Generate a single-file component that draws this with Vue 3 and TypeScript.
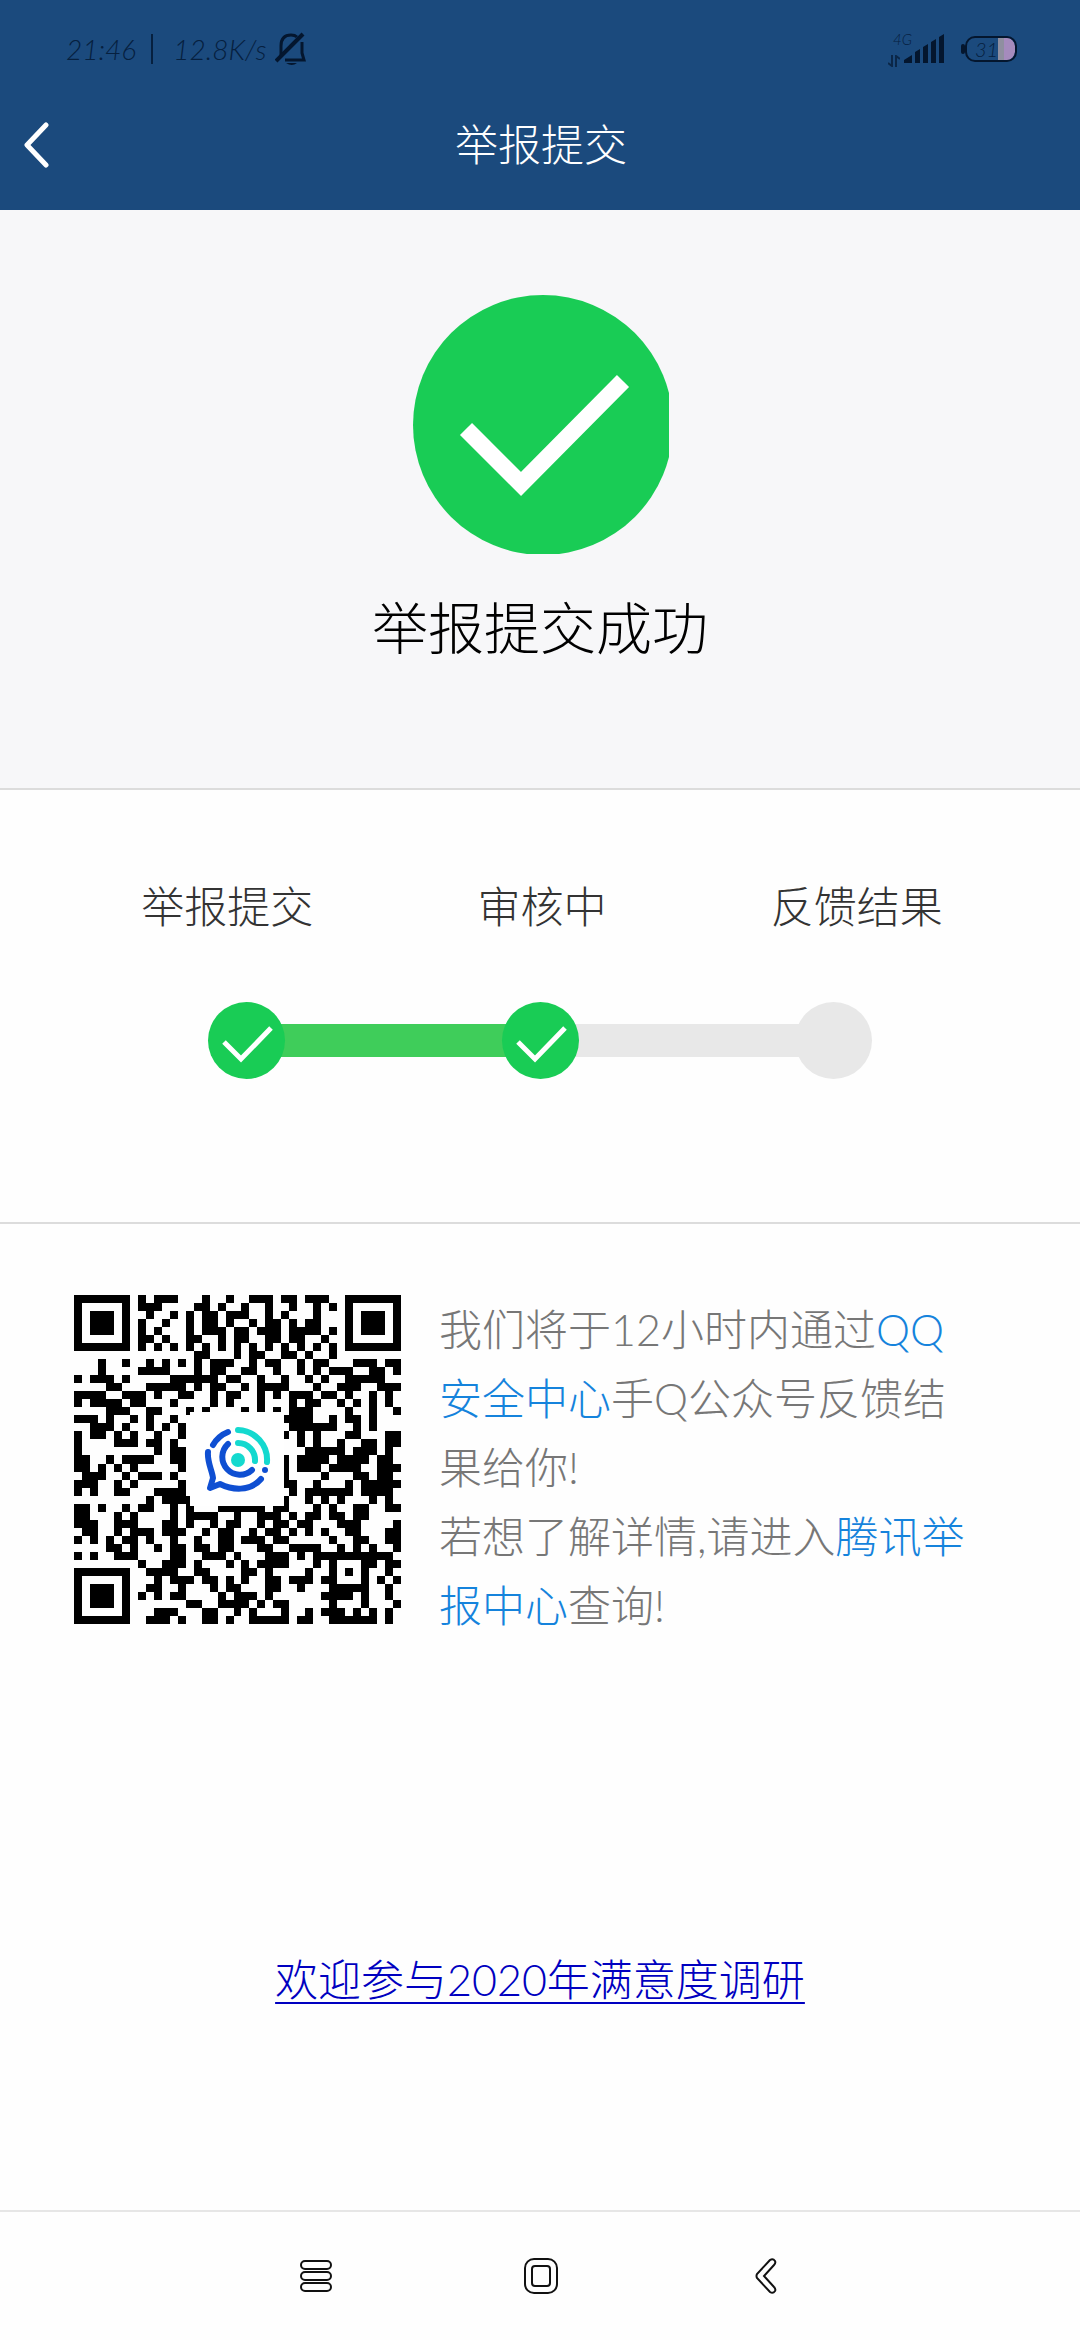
<script setup lang="ts">
interface Step {
  label: string
  done: boolean
}

const steps: Step[] = [
  { label: '举报提交', done: true },
  { label: '审核中', done: true },
  { label: '反馈结果', done: false },
]

// Dark modules of each QR row, as column numbers and inclusive ranges.
const qrRows: string[] = [
  '0-6 8 10-12 16 19 22-24 26-27 29-31 34-40',
  '0 6 8-10 15-16 18 21 24 27 30 32 34 40',
  '0 2-4 6 9 12 14 16-17 19-21 24 26 30 34 36-38 40',
  '0 2-4 6 8 11 14 16-17 19 22 24-25 27 29-30 34 36-38 40',
  '0 2-4 6 8 10 14 16-18 20-21 23-25 27-30 32 34 36-38 40',
  '0 6 8-9 11 14-15 18 20-21 24-25 27-28 31 34 40',
  '0-6 8 10 12 14 16 18 20 22 24 26 28 30 32 34-40',
  '15-16 20 22-23 26-27 29 32',
  '3 6 9 11 13 15 17-19 22 24-25 28 30-31 35-37 39-40',
  '3 8-11 15 17-18 21-22 25 28 30 32-34 37-38 40',
  '0 2-4 6 12-17 19-20 23 26 29 31 34-38',
  '4-5 9-13 15 17-18 21 23-26 30 33-35 38-40',
  '0-3 6-8 10 13-14 17 19-20 23 25 27-29 31-32 34 37 39',
  '0 2-5 7-8 12 17 19 23 27 29-30 33 35 37 39',
  '4-6 9-10 14 16 21 23 25 27-29 34 37 40',
  '0-2 4 7 9 12 26-29 32 34-35 37',
  '2-4 6 9 11 13 27-32 35 37',
  '0 2-3 5 7 10 13 26 28 30 34-35 39-40',
  '0 5-7 9-10 12 28 30 33 36-37 39-40',
  '0 10 12-13 29-33 35-37 39',
  '0-1 4 6-9 12-13 26 28-31 33-36 38-39',
  '0-1 3 5 7 13 26 28-30 32-35 38-40',
  '1-3 6 8-10 12 26 31 35-36 38-39',
  '0-2 5 7 13 26-27 30 34 36-40',
  '0 2 5-6 10-13 27 29-34 36-39',
  '9 11-14 26 29 31 33 37 39',
  '0-1 3 6 8-9 12 14 18-23 25-26 30 32 35-36 39-40',
  '0-1 5 7 12 14-17 20 23-25 27 29-30 32-33 35-36',
  '0-2 5-7 11-12 14 17 19-20 23 25-26 28-29 33-35 40',
  '1-2 5 7-9 11-13 16 18-19 22 24-25 27 29 31 34-35 39-40',
  '0 2 4 6-7 9 12 15 18-19 21-23 25-26 32 35-36 39-40',
  '4-5 7 10 12-13 15-16 18-19 23-24 27-30 33 35 37 40',
  '0 2 5-7 12-13 16-18 20 24-26 28 30-39',
  '8 11-13 15 19 21 23-26 30 32 36-37 39-40',
  '0-6 9-12 15-16 21-22 24 29 32 34 36 39',
  '0 6 10 12-14 16-17 19 21 24-25 27-29 31-32 36 38 40',
  '0 2-4 6 9-10 13 17 19-20 24-25 28 32-36 39',
  '0 2-4 6 8 10 12-13 18 20-22 24 31-34 36 39',
  '0 2-4 6 14-15 18-21 23 25-26 32 36 40',
  '0 6 10-12 16-17 20 22 26 29 31-33 35 37 39',
  '0-6 9-11 13 16-17 19 22-26 28-29 32-37 39',
]

const qrPath: string = qrRows
  .map((row, y) =>
    row
      .split(' ')
      .map((part) => {
        const [a, b] = part.split('-').map(Number)
        const w = (b ?? a) - a + 1
        return `M${a} ${y}h${w}v1h-${w}z`
      })
      .join(''),
  )
  .join('')
</script>

<template>
  <div class="page">
    <header class="top">
      <div class="status">
        <div class="status-left">
          <span>21:46</span>
          <span class="bar"></span>
          <span>12.8K/s</span>
          <svg class="bell" width="32" height="34" viewBox="0 0 32 34" fill="none" stroke="#04162e" stroke-width="3">
            <path d="M6 24V14C6 6 10 3 16 3q4 0 6 2" />
            <path d="M27 10v11l2 7H10" />
            <path d="M1 29L28 2" stroke-width="4" />
            <path d="M11 31h11q-5 4-11 0z" fill="#04162e" stroke="none" />
          </svg>
        </div>
        <div class="status-right">
          <div class="net">
            <span>4G</span>
            <svg width="12" height="12" viewBox="0 0 12 12" fill="none" stroke="#0b2748" stroke-width="2">
              <path d="M4 0v11L0 8M8 12V1l4 3" />
            </svg>
          </div>
          <svg width="41" height="30" viewBox="0 0 41 30" fill="#04162e">
            <path d="M0 29v-3l8-5v8zM11 29V18l5-3v14zM19 29V13l5-3v19zM27 29V8l5-3v24zM35 29V3l5-3v29z" />
          </svg>
          <div class="battery">
            <svg width="57" height="28" viewBox="0 0 57 28">
              <path d="M37 2h8a10 10 0 0 1 9 9v6a10 10 0 0 1-9 9h-8z" fill="#a58bbd" />
              <path d="M37 2h6v24h-6z" fill="#8f8fa0" />
              <rect x="5" y="2" width="50" height="24" rx="9" fill="none" stroke="#04162e" stroke-width="2" />
              <rect x="0" y="9" width="4" height="10" rx="2" fill="#04162e" />
            </svg>
            <span>31</span>
          </div>
        </div>
      </div>
      <div class="title-bar">
        <button class="back" type="button" aria-label="返回">
          <svg width="26" height="48" viewBox="0 0 26 48" fill="none" stroke="#fff" stroke-width="5" stroke-linecap="round" stroke-linejoin="round">
            <path d="M22 4L3 24l19 20" />
          </svg>
        </button>
        <h1>举报提交</h1>
      </div>
    </header>

    <section class="hero">
      <svg width="257" height="259" viewBox="0 0 257 259">
        <circle cx="131" cy="130" r="130" fill="#19cc55" />
        <path d="M54 134l55 55L211 86" fill="none" stroke="#fff" stroke-width="17" />
      </svg>
      <h2>举报提交成功</h2>
    </section>

    <section class="progress">
      <ol class="labels">
        <li v-for="step in steps" :key="step.label">{{ step.label }}</li>
      </ol>
      <div class="track">
        <template v-for="(step, i) in steps" :key="step.label">
          <span v-if="i > 0" class="link" :class="{ done: step.done }"></span>
          <span class="dot" :class="{ done: step.done }">
            <svg v-if="step.done" width="77" height="77" viewBox="0 0 77 77" fill="none" stroke="#fff" stroke-width="5">
              <path d="M16 40l17 17 30-31" />
            </svg>
          </span>
        </template>
      </div>
    </section>

    <section class="info">
      <svg class="qr" width="327" height="329" viewBox="0 0 327 329">
        <svg width="327" height="329" viewBox="0 0 41 41" preserveAspectRatio="none" shape-rendering="crispEdges">
          <path :d="qrPath" />
        </svg>
        <rect x="116" y="117" width="94" height="94" fill="#fff" />
        <g fill="none" stroke-width="6" stroke-linecap="round">
          <path d="M164 135a30 30 0 0 1 29 32M164 148a17 17 0 0 1 17 18" stroke="#14d9cf" />
          <path d="M154 149a17 17 0 1 0 24 26M154 137a30 30 0 0 0-15 13M134 157c-1 10 4 18 5 26l-3 10 10-4c12 6 30 8 41-5" stroke="#0f4fd2" stroke-linejoin="round" />
        </g>
        <circle cx="164" cy="165" r="7" fill="#14d9cf" />
        <circle cx="191" cy="175" r="3" fill="#0f4fd2" />
      </svg>
      <p>
        我们将于12小时内通过<a href="#">QQ安全中心</a>手Q公众号反馈结果给你!<br />若想了解详情,请进入<a href="#">腾讯举报中心</a>查询!
      </p>
    </section>

    <div class="survey"><a href="#">欢迎参与2020年满意度调研</a></div>

    <nav class="nav">
      <button type="button" aria-label="最近任务">
        <svg width="34" height="34" viewBox="0 0 34 34" fill="none" stroke="#111" stroke-width="2">
          <rect x="2" y="2" width="30" height="8" rx="4" />
          <rect x="2" y="13" width="30" height="8" rx="4" />
          <rect x="2" y="24" width="30" height="8" rx="4" />
        </svg>
      </button>
      <button type="button" aria-label="主页">
        <svg width="34" height="36" viewBox="0 0 34 36" fill="none" stroke="#111" stroke-width="2">
          <rect x="1" y="1" width="32" height="34" rx="9" />
          <rect x="8" y="8" width="18" height="20" rx="3" />
        </svg>
      </button>
      <button type="button" aria-label="返回">
        <svg width="22" height="36" viewBox="0 0 22 36" fill="none" stroke="#111" stroke-width="2">
          <path d="M15 2L2 16q-1 2 0 4l13 14q3 2 5-1 1-2-1-4L9 18 19 7q2-2 1-4-2-3-5-1z" />
        </svg>
      </button>
    </nav>
  </div>
</template>

<style>
body {
  margin: 0;
}
</style>

<style scoped>
.page {
  display: flex;
  flex-direction: column;
  min-height: 100vh;
  background: #fefefe;
  font-family: Lato, "Noto Sans CJK SC", sans-serif;
  font-weight: 300;
  font-size: 43px;
}
h1,
h2,
p,
ol {
  margin: 0;
  padding: 0;
  font-weight: 300;
}
svg {
  display: block;
}
button {
  display: flex;
  padding: 0;
  border: 0;
  background: none;
}
.top {
  background: #1b4a7d;
}
.status {
  display: flex;
  justify-content: space-between;
  box-sizing: border-box;
  height: 80px;
  padding: 18px 62px 0 66px;
  color: #06203f;
  font-size: 28px;
  font-style: italic;
}
.status-left,
.status-right {
  display: flex;
  align-items: center;
}
.bar {
  width: 2px;
  height: 30px;
  margin: 0 20px 0 15px;
  background: #06203f;
}
.bell {
  margin-left: 9px;
}
.net {
  display: flex;
  flex-direction: column;
  gap: 8px;
  margin-right: -8px;
  font-size: 15px;
  line-height: 15px;
}
.net svg {
  margin-left: -5px;
}
.battery {
  display: grid;
  align-items: center;
  margin-left: 16px;
  font-size: 20px;
}
.battery > * {
  grid-area: 1 / 1;
}
.battery span {
  padding-left: 14px;
}
.title-bar {
  display: grid;
  grid-template-columns: 1fr auto 1fr;
  align-items: center;
  height: 130px;
  padding: 0 22px 0 24px;
  color: #fff;
}
h1 {
  font-size: 43px;
  line-height: 64px;
}
.hero {
  display: flex;
  flex-direction: column;
  align-items: center;
  padding: 85px 0 118px;
  background: #f7f7f9;
  border-bottom: 2px solid #dcdcdc;
}
h2 {
  margin-top: 32px;
  color: #000;
  font-size: 56px;
  line-height: 84px;
}
.progress {
  padding: 85px 0 143px;
  border-bottom: 2px solid #dcdcdc;
}
.labels {
  display: flex;
  padding: 0 66px 0 70px;
  color: #333;
  line-height: 64px;
  list-style: none;
}
.labels li {
  flex: 1;
  text-align: center;
}
.track {
  display: flex;
  align-items: center;
  margin-top: 63px;
  padding: 0 208px;
}
.dot {
  z-index: 1;
  width: 77px;
  height: 77px;
  border-radius: 50%;
  background: #e8e8e8;
}
.dot.done {
  background: #19cc55;
}
.link {
  flex: 1;
  height: 33px;
  margin: 0 -6px;
  background: #e8e8e8;
}
.link.done {
  background: #3fcd5a;
}
.info {
  display: flex;
  gap: 38px;
  padding: 71px 105px 0 74px;
}
.qr {
  flex: none;
}
.info p {
  flex: 1;
  color: #777;
  line-height: 69px;
}
.info a {
  color: #1583dc;
  text-decoration: none;
}
.survey {
  margin-top: 308px;
  line-height: 64px;
  text-align: center;
}
.survey a {
  color: #0000c0;
  text-decoration-thickness: 2px;
  text-underline-offset: 6px;
}
.nav {
  display: flex;
  align-items: center;
  height: 128px;
  margin-top: auto;
  padding: 0 202px 0 204px;
  border-top: 2px solid #e6e6e6;
}
.nav button {
  flex: 1;
  justify-content: center;
}
</style>
